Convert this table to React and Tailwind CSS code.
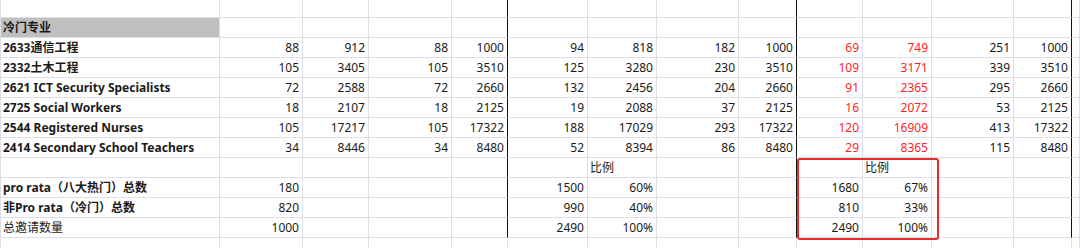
import React from "react";

const rows = [
  { label: "2633通信工程", v: [88, 912, 88, 1000, 94, 818, 182, 1000, 69, 749, 251, 1000] },
  { label: "2332土木工程", v: [105, 3405, 105, 3510, 125, 3280, 230, 3510, 109, 3171, 339, 3510] },
  { label: "2621 ICT Security Specialists", v: [72, 2588, 72, 2660, 132, 2456, 204, 2660, 91, 2365, 295, 2660] },
  { label: "2725 Social Workers", v: [18, 2107, 18, 2125, 19, 2088, 37, 2125, 16, 2072, 53, 2125] },
  { label: "2544 Registered Nurses", v: [105, 17217, 105, 17322, 188, 17029, 293, 17322, 120, 16909, 413, 17322] },
  { label: "2414 Secondary School Teachers", v: [34, 8446, 34, 8480, 52, 8394, 86, 8480, 29, 8365, 115, 8480] },
];

const summary = [
  { label: "pro rata（八大热门）总数", bold: true, b: 180, f: 1500, g: "60%", j: 1680, k: "67%" },
  { label: "非Pro rata（冷门）总数", bold: true, b: 820, f: 990, g: "40%", j: 810, k: "33%" },
  { label: "总邀请数量", bold: false, b: 1000, f: 2490, g: "100%", j: 2490, k: "100%" },
];

// columns E, I, M carry the thick dark divider
const darkCols = [4, 8, 12];

function Cell({ col, children, align = "right", red, bold, grey, dark = true, h = "h-[20px]" }) {
  const isDark = dark && darkCols.includes(col);
  return (
    <div
      className={[
        h,
        "border-b border-r border-b-[#dcdfe8] flex items-center overflow-visible whitespace-nowrap",
        isDark ? "border-r-[#111]" : "border-r-[#dcdfe8]",
        align === "right" ? "justify-end pr-[3px]" : "justify-start pl-[2px]",
        red ? "text-[#ff1f1f]" : "text-[#1a1a1a]",
        bold ? "font-bold" : "",
        grey ? "bg-[#bfbfbf]" : "",
      ].join(" ")}
    >
      {children}
    </div>
  );
}

function EmptyRow({ h, dark = true }) {
  return (
    <>
      {Array.from({ length: 14 }).map((_, i) => (
        <Cell key={i} col={i} h={h} dark={dark} />
      ))}
    </>
  );
}

export default function App() {
  return (
    <div className="w-[1080px] h-[248px] overflow-hidden bg-white relative font-['Noto_Sans','Noto_Sans_CJK_SC',sans-serif] text-[12px] leading-none">
      <div className="grid grid-cols-[219px_83px_66px_83px_56px_80px_69px_82px_58px_66px_69px_82px_58px_1fr] border-l border-l-[#dcdfe8]">
        <EmptyRow h="h-[18px]" />

        {/* 冷门专业 header */}
        <Cell col={0} align="left" bold grey>冷门专业</Cell>
        {Array.from({ length: 13 }).map((_, i) => (
          <Cell key={i} col={i + 1} />
        ))}

        {rows.map((r) => (
          <React.Fragment key={r.label}>
            <Cell col={0} align="left" bold>{r.label}</Cell>
            {r.v.map((n, i) => (
              <Cell key={i} col={i + 1} red={i === 8 || i === 9}>{n}</Cell>
            ))}
            <Cell col={13} />
          </React.Fragment>
        ))}

        {/* 比例 row */}
        {Array.from({ length: 14 }).map((_, i) => (
          <Cell key={i} col={i} align={i === 6 || i === 10 ? "left" : "right"}>
            {i === 6 || i === 10 ? "比例" : null}
          </Cell>
        ))}

        {summary.map((s) => (
          <React.Fragment key={s.label}>
            <Cell col={0} align="left" bold={s.bold}>{s.label}</Cell>
            <Cell col={1}>{s.b}</Cell>
            <Cell col={2} />
            <Cell col={3} />
            <Cell col={4} />
            <Cell col={5}>{s.f}</Cell>
            <Cell col={6}>{s.g}</Cell>
            <Cell col={7} />
            <Cell col={8} />
            <Cell col={9}>{s.j}</Cell>
            <Cell col={10}>{s.k}</Cell>
            <Cell col={11} />
            <Cell col={12} />
            <Cell col={13} />
          </React.Fragment>
        ))}

        <EmptyRow h="h-[20px]" dark={false} />
      </div>

      {/* red highlight box */}
      <div className="absolute left-[797px] top-[158px] w-[142px] h-[82px] border-2 border-[#ea2b2b] rounded-[3px] pointer-events-none" />
    </div>
  );
}
